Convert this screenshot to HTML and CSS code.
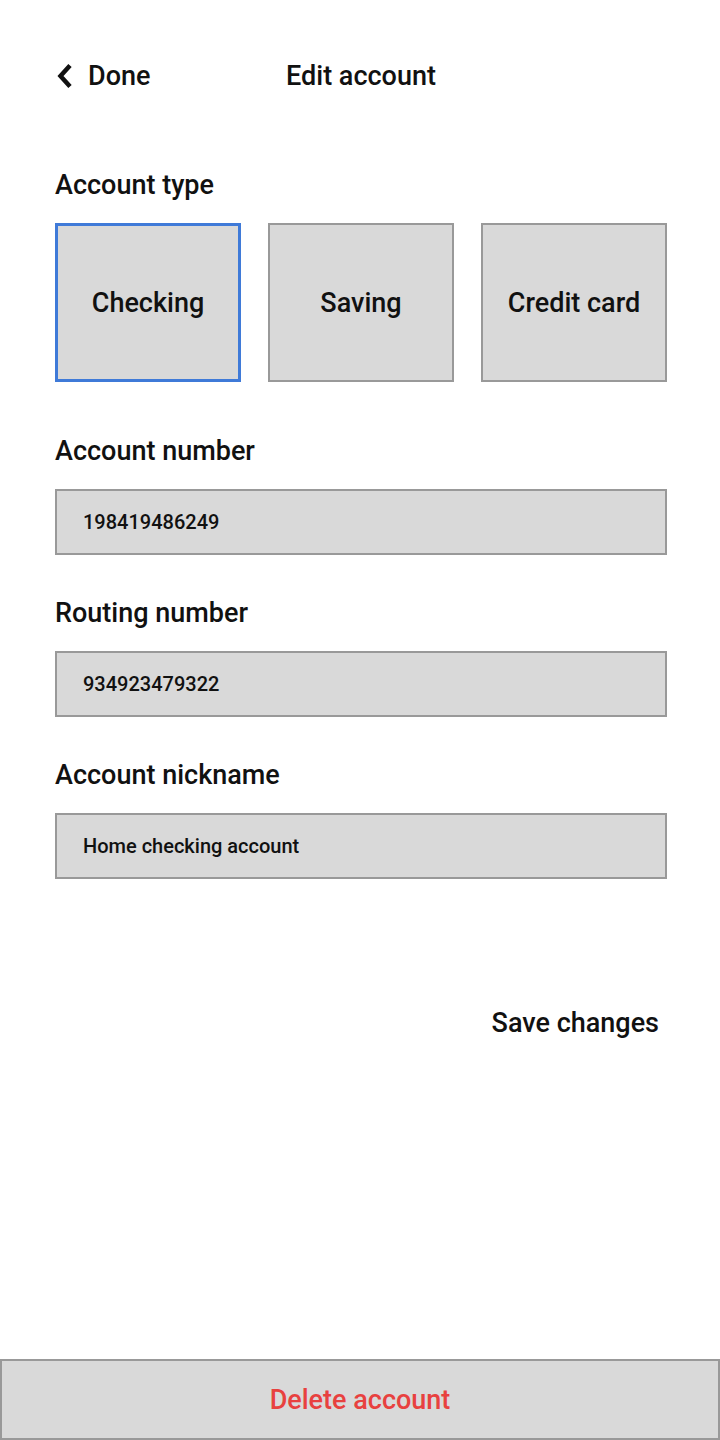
FILE: index.html
```html
<!DOCTYPE html>
<html>
<head>
<meta charset="utf-8">
<link rel="stylesheet" href="styles.css">
</head>
<body>
<div class="screen">
  <div class="page">
    <header class="header">
      <div class="back">
        <svg class="chev" width="18" height="28" viewBox="0 0 18 28"><path d="M15 3.5 L5.5 14 L15 24.5" fill="none" stroke="#111" stroke-width="4.5" stroke-linejoin="miter"/></svg>
        <span>Done</span>
      </div>
      <div class="title">Edit account</div>
      <div></div>
    </header>

    <div class="label first">Account type</div>
    <div class="types">
      <div class="type selected">Checking</div>
      <div class="type">Saving</div>
      <div class="type">Credit card</div>
    </div>

    <div class="label gap-l">Account number</div>
    <div class="field">198419486249</div>

    <div class="label gap-m">Routing number</div>
    <div class="field">934923479322</div>

    <div class="label gap-m">Account nickname</div>
    <div class="field">Home checking account</div>

    <div class="save-row"><span class="save">Save changes</span></div>
  </div>
  <div class="delete">Delete account</div>
</div>
</body>
</html>
```
FILE: styles.css
```css
* { box-sizing: border-box; }
html, body { margin: 0; padding: 0; background: #fff; }
body { font-family: Roboto, "Liberation Sans", sans-serif; color: #111; font-weight: 500; }
.screen { width: 720px; height: 1440px; display: flex; flex-direction: column; }
.page { flex: 1; padding: 0 53px 0 55px; }
.header {
  margin-top: 56px; height: 40px;
  display: grid; grid-template-columns: 1fr auto 1fr; align-items: center;
  font-size: 27px; margin-left: -55px; margin-right: -53px; padding-left: 55px; padding-right: 53px;
}
.back { display: flex; align-items: center; gap: 15px; }
.chev { display: block; }
.title { text-align: center; }
.label { font-size: 27px; line-height: 32px; }
.label.first { margin-top: 73px; }
.label.gap-l { margin-top: 53px; }
.label.gap-m { margin-top: 42px; }
.types {
  margin-top: 22px;
  display: grid; grid-template-columns: repeat(3, 1fr); gap: 27px;
}
.type {
  height: 159px; background: #d9d9d9; border: 2px solid #999;
  display: flex; align-items: center; justify-content: center;
  font-size: 27px;
}
.type.selected { border: 3px solid #3f7ad8; }
.field {
  margin-top: 22px; height: 66px; background: #d9d9d9; border: 2px solid #999;
  display: flex; align-items: center; padding-left: 26px; font-size: 20px;
}
.save-row { margin-top: 128px; display: flex; justify-content: flex-end; padding-right: 8px; }
.save { font-size: 27px; line-height: 32px; }
.delete {
  height: 81px; background: #d9d9d9; border: 2px solid #999;
  display: flex; align-items: center; justify-content: center;
  color: #e8413f; font-size: 27px;
}
```
